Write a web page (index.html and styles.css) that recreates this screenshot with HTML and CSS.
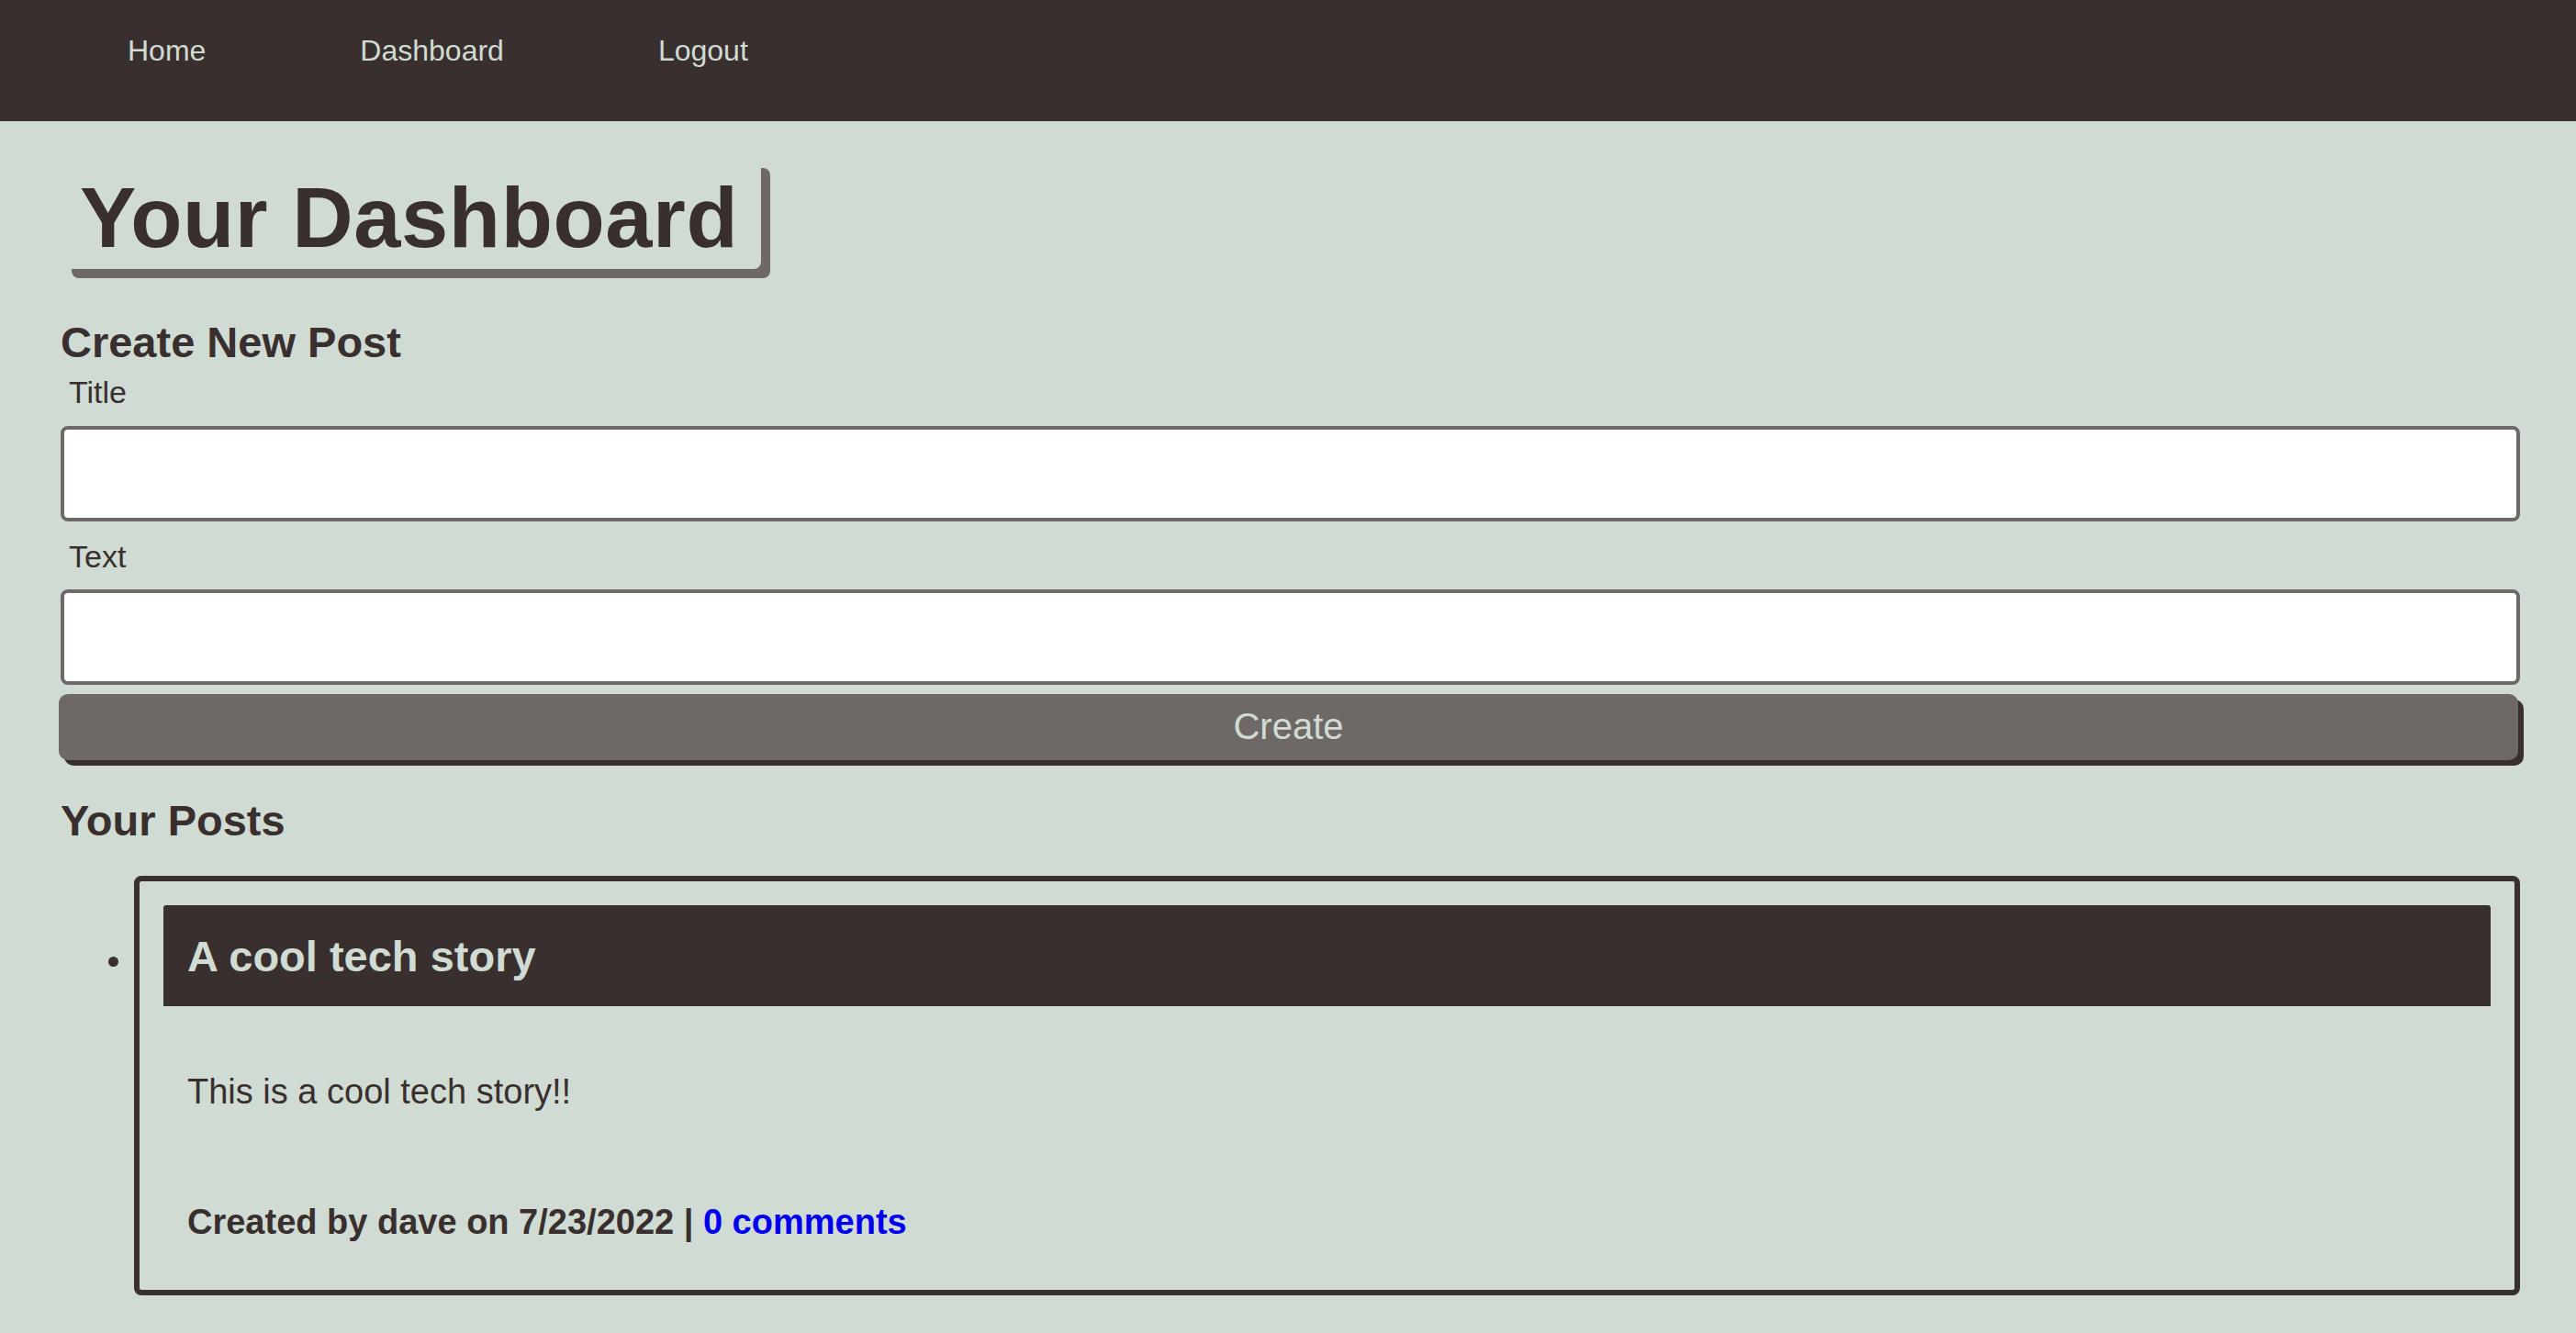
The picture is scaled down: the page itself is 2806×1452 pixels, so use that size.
FILE: index.html
```html
<!DOCTYPE html>
<html lang="en">
<head>
<meta charset="utf-8">
<title>Your Dashboard</title>
<link rel="stylesheet" href="styles.css">
</head>
<body>
<nav class="topnav">
  <a class="nav-link" href="#">Home</a>
  <a class="nav-link" href="#">Dashboard</a>
  <a class="nav-link" href="#">Logout</a>
</nav>
<main class="main">
  <h1 class="dash-title">Your Dashboard</h1>
  <h2 class="section-title create-title">Create New Post</h2>
  <form class="post-form">
    <label class="field-label first-label" for="title">Title</label>
    <input class="field-input" id="title" type="text">
    <label class="field-label" for="text">Text</label>
    <input class="field-input" id="text" type="text">
    <button class="create-btn" type="button">Create</button>
  </form>
  <h2 class="section-title posts-title">Your Posts</h2>
  <ul class="post-list">
    <li class="post-item">
      <article class="post-card">
        <h2 class="post-title">A cool tech story</h2>
        <p class="post-body">This is a cool tech story!!</p>
        <p class="post-meta">Created by dave on 7/23/2022 | <a class="comments-link" href="#">0 comments</a></p>
      </article>
    </li>
  </ul>
</main>
</body>
</html>
```
FILE: styles.css
```css
html, body {
  margin: 0;
  padding: 0;
}

body {
  background: #d0dbd3;
  color: #382f2e;
  font-family: "Liberation Sans", Arial, sans-serif;
}

.topnav {
  box-sizing: border-box;
  height: 132px;
  background: #382f2e;
  display: flex;
  gap: 168px;
  padding: 35px 0 0 139px;
}

.nav-link {
  color: #d0dbd3;
  font-size: 32px;
  line-height: 40px;
  text-decoration: none;
}

.main {
  display: flex;
  flex-direction: column;
  padding: 0 61px 0 66px;
}

.dash-title {
  align-self: flex-start;
  margin: 41px 0 0 2px;
  padding: 18px 25px 10px 19px;
  font-size: 92px;
  line-height: 92px;
  font-weight: 700;
  letter-spacing: 0.6px;
  border-radius: 8px;
  box-shadow: 10px 10px 0 #6e6966;
}

.section-title {
  margin: 0;
  font-size: 47px;
  line-height: 54px;
  font-weight: 700;
}

.create-title {
  margin-top: 52.7px;
}

.post-form {
  display: flex;
  flex-direction: column;
}

.field-label {
  display: block;
  margin-top: 18px;
  padding-left: 9px;
  font-size: 34px;
  line-height: 40px;
}

.first-label {
  margin-top: 7.5px;
}

.field-input {
  display: block;
  box-sizing: border-box;
  width: 100%;
  height: 104px;
  margin: 16.5px 0 0;
  border: 4px solid #6e6966;
  border-radius: 8px;
  background: #fff;
  font-size: 32px;
}

.create-btn {
  box-sizing: border-box;
  height: 72px;
  margin: 9.8px 2px 0 -2px;
  border: 0;
  border-radius: 10px;
  background: #6e6966;
  box-shadow: 6px 6px 0 #382f2e;
  color: #d0dbd3;
  font-family: "Liberation Sans", Arial, sans-serif;
  font-size: 40px;
  padding: 0;
}

.posts-title {
  margin-top: 38.7px;
}

.post-list {
  margin: 33.3px 0 40px;
  padding: 0 0 0 80px;
  list-style: disc;
}

.post-item {
  font-size: 35px;
}

.post-card {
  border: 6px solid #382f2e;
  border-radius: 8px;
  padding: 26px;
}

.post-title {
  margin: 0;
  background: #382f2e;
  color: #d0dbd3;
  border-radius: 3px 3px 0 0;
  font-size: 47px;
  line-height: 108px;
  padding: 2px 0 0 26px;
  font-weight: 700;
}

.post-body {
  margin: 70.8px 0 0;
  padding-left: 26px;
  font-size: 38px;
  line-height: 44px;
}

.post-meta {
  margin: 98px 0 26px;
  padding-left: 26px;
  font-size: 38px;
  line-height: 44px;
  font-weight: 700;
}

.comments-link {
  color: #0000ee;
  text-decoration: none;
}
```
